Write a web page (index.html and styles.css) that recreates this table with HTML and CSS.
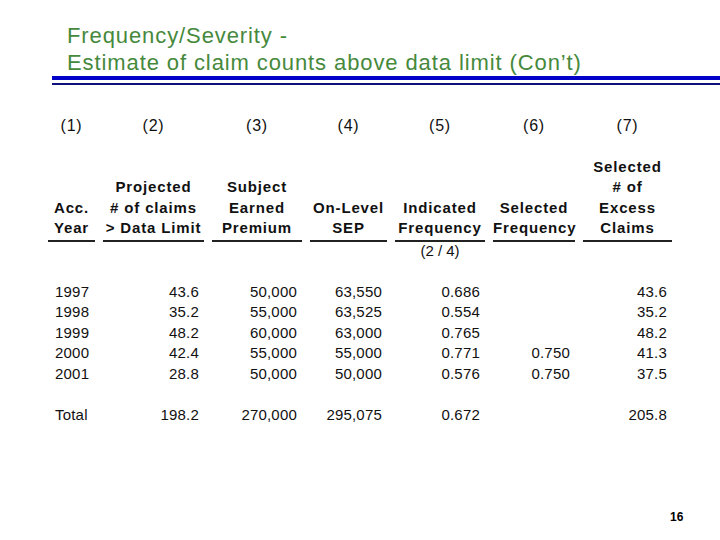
FILE: index.html
```html
<!DOCTYPE html>
<html>
<head>
<meta charset="utf-8">
<link rel="stylesheet" href="styles.css">
</head>
<body>
<div class="slide">
  <header class="title">
    <div>Frequency/Severity -</div>
    <div>Estimate of claim counts above data limit (Con’t)</div>
  </header>
  <div class="rules"><div class="rule-thick"></div><div class="rule-thin"></div></div>

  <div class="table">
    <div class="num">(1)</div>
    <div class="num">(2)</div>
    <div class="num">(3)</div>
    <div class="num">(4)</div>
    <div class="num">(5)</div>
    <div class="num">(6)</div>
    <div class="num">(7)</div>

    <div class="head">Acc.<br>Year</div>
    <div class="head">Projected<br># of claims<br>&gt; Data Limit</div>
    <div class="head">Subject<br>Earned<br>Premium</div>
    <div class="head">On-Level<br>SEP</div>
    <div class="head">Indicated<br>Frequency</div>
    <div class="head">Selected<br>Frequency</div>
    <div class="head">Selected<br># of<br>Excess<br>Claims</div>

    <div class="note"></div>
    <div class="note"></div>
    <div class="note"></div>
    <div class="note"></div>
    <div class="note">(2 / 4)</div>
    <div class="note"></div>
    <div class="note"></div>

    <div class="body left">1997<br>1998<br>1999<br>2000<br>2001</div>
    <div class="body">43.6<br>35.2<br>48.2<br>42.4<br>28.8</div>
    <div class="body">50,000<br>55,000<br>60,000<br>55,000<br>50,000</div>
    <div class="body">63,550<br>63,525<br>63,000<br>55,000<br>50,000</div>
    <div class="body">0.686<br>0.554<br>0.765<br>0.771<br>0.576</div>
    <div class="body"><br><br><br>0.750<br>0.750</div>
    <div class="body">43.6<br>35.2<br>48.2<br>41.3<br>37.5</div>

    <div class="total left">Total</div>
    <div class="total">198.2</div>
    <div class="total">270,000</div>
    <div class="total">295,075</div>
    <div class="total">0.672</div>
    <div class="total"></div>
    <div class="total">205.8</div>
  </div>

  <footer class="page">16</footer>
</div>
</body>
</html>
```

FILE: styles.css
```css
html, body {
  margin: 0;
  padding: 0;
  background: #ffffff;
}
.slide {
  width: 720px;
  height: 540px;
  position: relative;
  overflow: hidden;
  font-family: "Liberation Sans", Arial, sans-serif;
  color: #111111;
}
.title {
  padding: 22px 0 0 67px;
  font-size: 22px;
  line-height: 27px;
  color: #46893c;
  letter-spacing: 0.9px;
}
.rules {
  margin: 0 0 0 52px;
  display: flex;
  flex-direction: column;
  gap: 3px;
}
.rule-thick {
  height: 4px;
  background: #0000c8;
}
.rule-thin {
  height: 2px;
  background: #10107a;
}
.table {
  display: grid;
  grid-template-columns: 47px 101px 90px 77px 90px 82px 89px;
  column-gap: 8px;
  margin: 31px 0 0 48px;
  font-size: 15px;
  line-height: 20.5px;
}
.num {
  text-align: center;
  font-size: 16px;
  letter-spacing: 0.8px;
  padding-bottom: 20px;
}
.head {
  align-self: end;
  text-align: center;
  font-weight: bold;
  letter-spacing: 0.85px;
  border-bottom: 2px solid #222;
  padding-bottom: 1px;
}
.note {
  text-align: center;
  height: 40px;
  line-height: 18px;
}
.body {
  text-align: right;
  padding-right: 5px;
  letter-spacing: 0.2px;
}
.total {
  text-align: right;
  padding-right: 5px;
  margin-top: 21px;
  letter-spacing: 0.2px;
}
.left {
  text-align: left;
  padding-left: 7px;
  padding-right: 0;
}
.page {
  position: absolute;
  left: 670px;
  top: 510px;
  font-size: 12px;
  font-weight: bold;
  color: #000;
}
```
